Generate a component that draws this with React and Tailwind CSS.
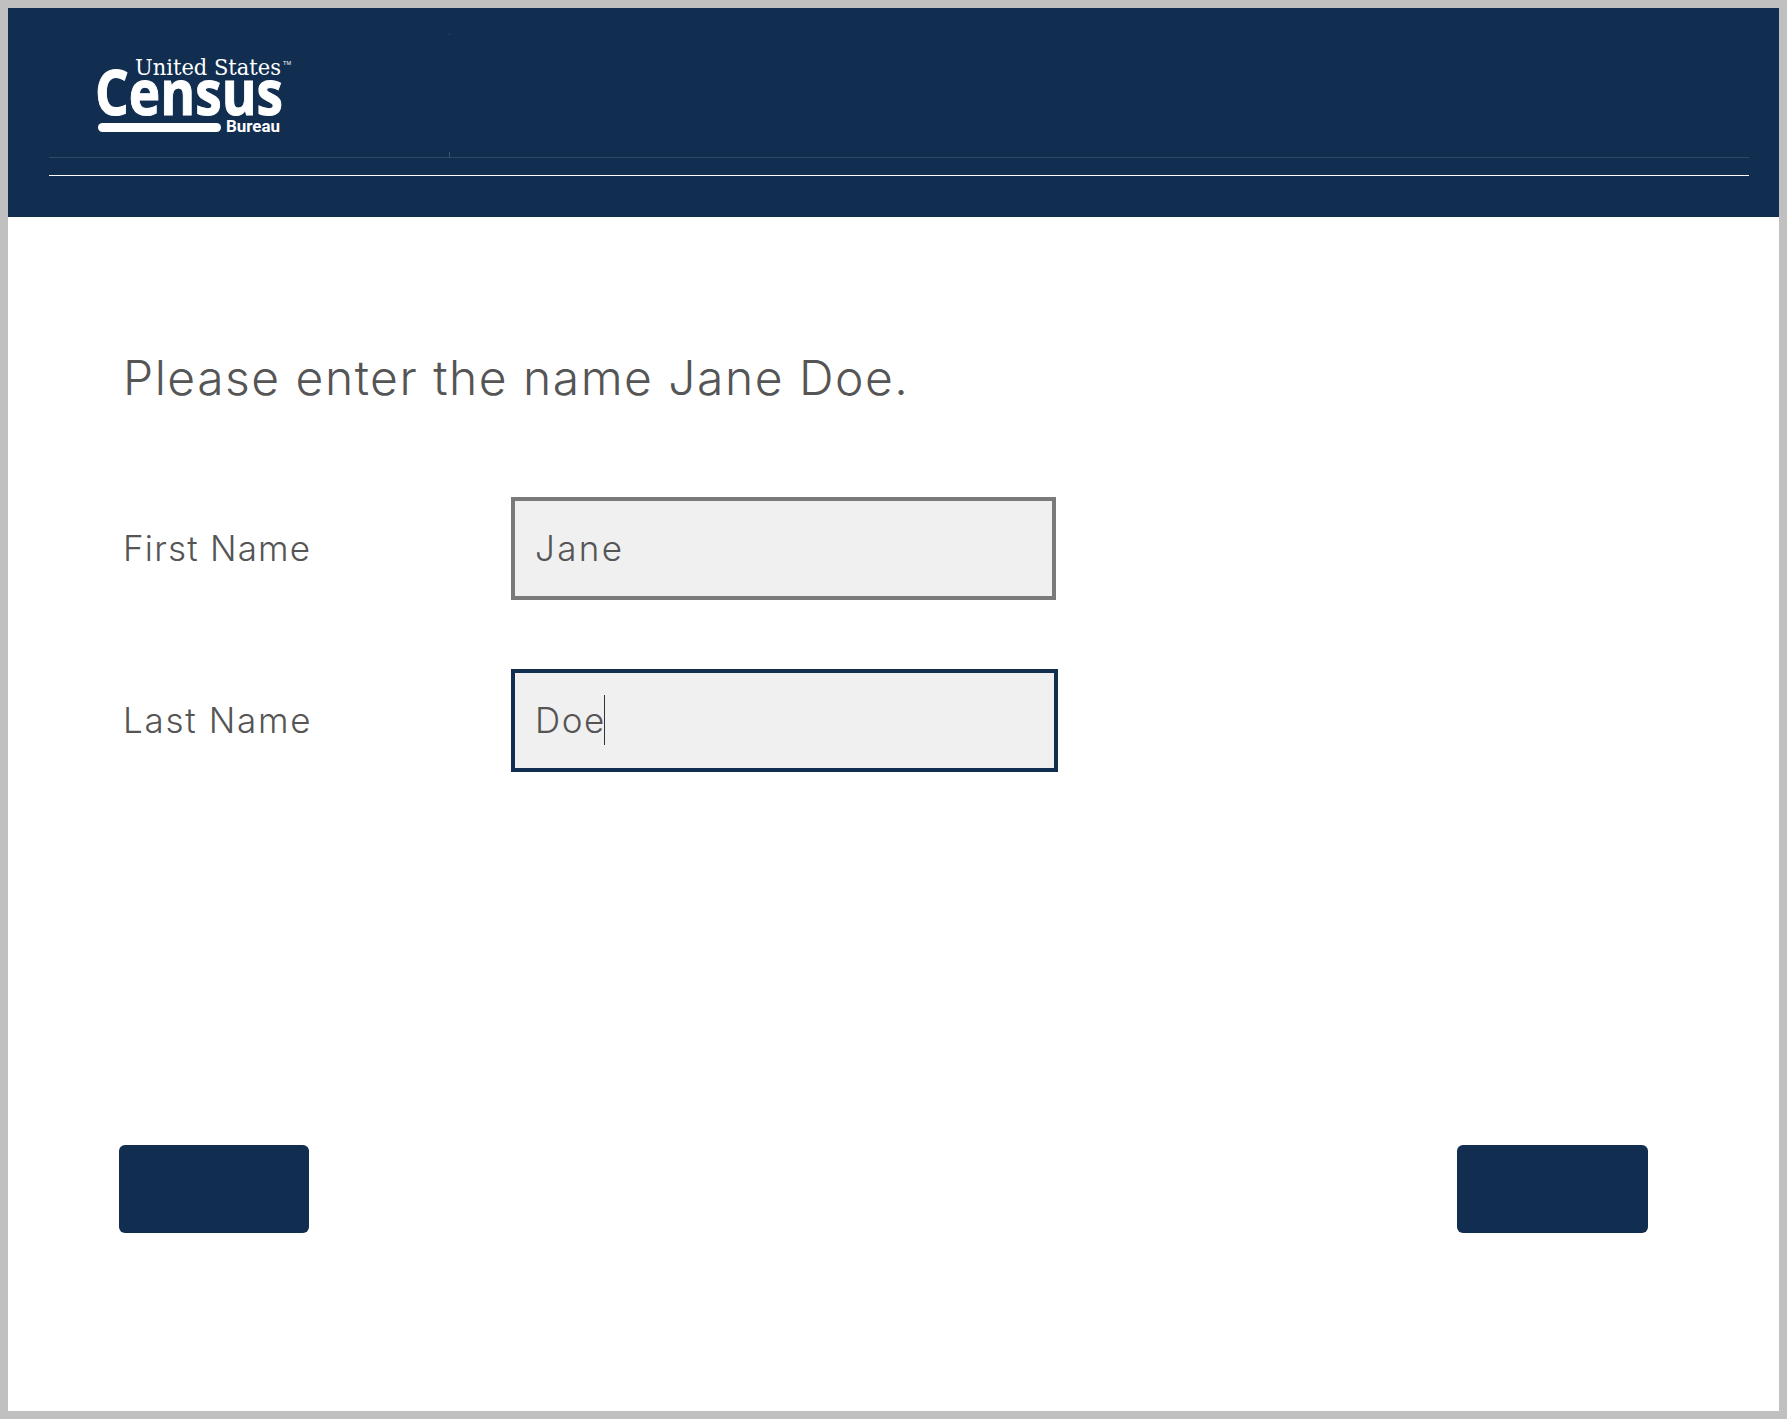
import React from "react";

function CensusLogo() {
  return (
    <svg width="200" height="88" viewBox="0 0 200 88" className="block overflow-visible" aria-label="United States Census Bureau">
      <text x="37" y="25" fill="#fff" fontFamily="'DejaVu Serif', serif" fontSize="23" textLength="146" lengthAdjust="spacingAndGlyphs">United States</text>
      <text x="185" y="15" fill="#fff" fontFamily="'Liberation Sans', sans-serif" fontSize="5.5" textLength="8" lengthAdjust="spacingAndGlyphs">TM</text>
      <text x="-3" y="65" fill="#fff" stroke="#fff" strokeWidth="1" fontFamily="'Open Sans', sans-serif" fontWeight="700" fontSize="63" textLength="188" lengthAdjust="spacingAndGlyphs">Census</text>
      <rect x="0" y="73" width="123" height="9" rx="4.5" fill="#fff" />
      <text x="128" y="82" fill="#fff" fontFamily="'Roboto', sans-serif" fontWeight="700" fontSize="17" textLength="54" lengthAdjust="spacingAndGlyphs">Bureau</text>
    </svg>
  );
}

function Field({ label, labelClass, value, valueClass, focused, width }) {
  return (
    <div className="flex items-center">
      <label className={`w-[392px] pb-[2px] pl-[4px] text-[35px] font-light leading-[48px] text-[#555555] ${labelClass}`}>{label}</label>
      <div className="relative">
        <input
          readOnly
          value={value}
          style={{ width }}
          className={`block h-[103px] border-4 bg-[#f0f0f0] pb-[2px] pl-[20px] text-[35px] font-light text-[#555555] outline-none ${valueClass} ${focused ? "border-[#112e51]" : "border-[#7a7a7a]"}`}
        />
        {focused && <span className="absolute left-[93px] top-[26px] h-[50px] w-px bg-[#333333]" />}
      </div>
    </div>
  );
}

export default function App() {
  return (
    <div className="flex h-[1419px] w-[1787px] flex-col border-8 border-[#c0c0c0] bg-white font-['Inter',sans-serif]">
      <header className="relative h-[209px] shrink-0 bg-[#112e51] pl-[41px] pr-[30px]">
        <div className="h-[150px] border-b border-[#2f4865] pl-[49px] pt-[42px]">
          <CensusLogo />
        </div>
        <div className="mt-[17px] h-px bg-white" />
        <span className="absolute left-[441px] top-[26px] h-px w-px bg-[#3a5270]" />
        <span className="absolute left-[441px] top-[144px] h-[6px] w-px bg-[#3a5270]" />
      </header>
      <main className="flex flex-1 flex-col px-[111px] pt-[131px]">
        <h1 className="pl-[4px] text-[48px] font-light leading-[60px] tracking-[1.5px] text-[#555555]">Please enter the name Jane Doe.</h1>
        <div className="mt-[89px] flex flex-col gap-[69px]">
          <Field label="First Name" labelClass="tracking-[1.2px]" value="Jane" valueClass="tracking-[2.4px]" width={545} />
          <Field label="Last Name" labelClass="tracking-[1.7px]" value="Doe" valueClass="tracking-[1.6px]" focused width={547} />
        </div>
        <div className="mt-[373px] flex justify-between pr-[20px]">
          <button aria-label="Back" className="h-[88px] w-[190px] rounded-[6px] bg-[#112e51]" />
          <button aria-label="Next" className="h-[88px] w-[191px] rounded-[6px] bg-[#112e51]" />
        </div>
      </main>
    </div>
  );
}
